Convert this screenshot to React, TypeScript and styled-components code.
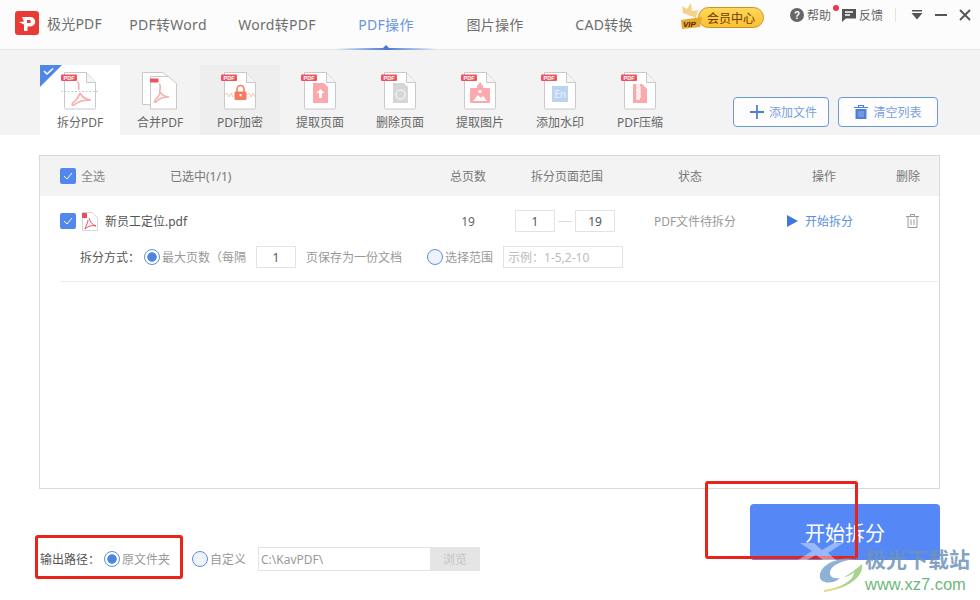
import React from "react";
import styled, { createGlobalStyle } from "styled-components";

const Global = createGlobalStyle`
  html, body { margin: 0; padding: 0; background: #fff; }
  body { font-family: "Noto Sans", "Noto Sans CJK SC", sans-serif; color: #666; }
  * { box-sizing: border-box; }
`;

const Page = styled.div`
  position: relative; width: 980px; height: 600px; overflow: hidden; background: #fff;
  display: flex; flex-direction: column;
`;
const Header = styled.header`
  height: 50px; flex: none; background: #fcfcfc; border-bottom: 1px solid #e2e4e8;
  display: flex; align-items: flex-start; padding-left: 15px;
`;
const Brand = styled.div`
  width: 98.5px; height: 49px; flex: none; display: flex; align-items: center; gap: 8px;
  font-size: 14px; color: #6e6e6e; padding-bottom: 4px; letter-spacing: .2px;
`;
const LogoMark = styled.svg`flex: none;`;
const Nav = styled.nav`display: flex; flex: none;`;
const NavItem = styled.div<{ $active?: boolean }>`
  position: relative; width: 109px; height: 49px; display: flex; align-items: center; justify-content: center;
  font-size: 14px; padding-bottom: 2px; white-space: nowrap; letter-spacing: .3px;
  color: ${(p) => (p.$active ? "#6b95dc" : "#6e6e6e")};
`;
const NavMark = styled.span`
  position: absolute; left: 4px; right: 4px; bottom: -1px; height: 2px;
  background: linear-gradient(90deg, rgba(74,120,214,0), #4a78d6 50%, rgba(74,120,214,0));
  &::after {
    content: ""; position: absolute; left: 50%; top: -3px; margin-left: -3px;
    border: 3px solid transparent; border-top: 0; border-bottom: 3px solid #4a78d6;
  }
`;
const HeaderRight = styled.div`
  margin-left: 21.5px; height: 29px; flex: none; display: flex; align-items: center; font-size: 12px; color: #666; white-space: nowrap;
`;
const Vip = styled.div`display: flex; align-items: center; position: relative; width: 84px; height: 26px; margin-top: 4px; flex: none;`;
const VipPill = styled.span`
  position: absolute; left: 18px; right: 0; top: 3.5px; height: 21px; border-radius: 11px;
  background: linear-gradient(#ffd75a, #fcc034); border: 1px solid #c89422; color: #6b3b00; font-size: 12px;
  display: flex; align-items: center; justify-content: flex-end; padding-right: 8px;
`;
const VipIcon = styled.svg`position: absolute; left: 0; top: -3px; z-index: 1;`;
const Tool = styled.div`display: flex; align-items: center; gap: 3px; position: relative; flex: none;`;
const HelpGroup = styled.div`display: flex; align-items: center; gap: 11px; margin-left: 26px; flex: none;`;
const Dot = styled.span`
  position: absolute; right: -8px; top: -1px; width: 6px; height: 6px; border-radius: 50%; background: #f0344a;
`;
const VDivider = styled.span`width: 1px; height: 14px; background: #e3e3e3; margin: 0 15px 0 12px; flex: none;`;
const WinButtons = styled.div`display: flex; align-items: center; gap: 12px; flex: none;`;

const Toolbar = styled.div`
  height: 85px; flex: none; background: #f3f3f3; padding: 15px 42px 0 40px; display: flex; align-items: flex-start;
`;
const ToolItem = styled.div<{ $state?: "selected" | "hover" }>`
  position: relative; width: 80px; height: 70px; flex: none; padding-top: 6px;
  display: flex; flex-direction: column; align-items: center;
  font-size: 12px; color: #666; white-space: nowrap;
  background: ${(p) => (p.$state === "selected" ? "#fff" : p.$state === "hover" ? "#eeeeee" : "transparent")};
`;
const ToolLabel = styled.span`margin-top: 3px; line-height: 18px;`;
const Corner = styled.svg`position: absolute; left: 0; top: 0;`;
const ToolActions = styled.div`margin-left: auto; margin-top: 32px; display: flex; gap: 9px;`;
const OutlineBtn = styled.button<{ $w: number; $pad: number }>`
  width: ${(p) => p.$w}px; height: 30px; background: #fdfdfd; border: 1px solid #6f97dc; border-radius: 4px;
  color: #7aa0de; font: inherit; font-size: 12px; display: flex; align-items: center; justify-content: center; gap: 5px;
  padding: 0 0 0 ${(p) => p.$pad}px;
`;

const Main = styled.main`padding: 20px 40px 0 39px; flex: none;`;
const Table = styled.section`height: 334px; border: 1px solid #d9d9d9; background: #fff;`;
const Columns = "370px 76px 122px 124px 144px 24px";
const TableHead = styled.div`
  height: 40px; background: #f3f3f3; padding-left: 20px; display: grid; grid-template-columns: ${Columns};
  align-items: center; font-size: 12px; color: #777;
`;
const Cell = styled.div`display: flex; justify-content: center; align-items: center; white-space: nowrap;`;
const LeftCell = styled.div`display: flex; align-items: center; white-space: nowrap;`;
const SelectedText = styled.span`margin-left: 65px;`;
const Check = styled.span`
  width: 16px; height: 16px; border-radius: 2px; background: #5288ee; display: flex; align-items: center; justify-content: center; flex: none;
`;
const CheckLabel = styled.span`margin-left: 5px; color: #888;`;
const RowMain = styled.div`
  height: 50px; padding-left: 20px; display: grid; grid-template-columns: ${Columns}; align-items: center; font-size: 12px; color: #666;
`;
const FileIcon = styled.svg`margin-left: 5px; flex: none;`;
const FileName = styled.span`margin-left: 6px; color: #555;`;
const RangeGroup = styled.div`display: flex; align-items: center; margin-left: -4px;`;
const RangeBox = styled.span`
  width: 40px; height: 22px; border: 1px solid #e3e3e3; display: flex; align-items: center; justify-content: center; color: #555; background: #fff;
`;
const Dash = styled.span`width: 14px; height: 1px; background: #ddd; margin: 0 3px;`;
const Muted = styled.span`color: #999; margin-left: 10px;`;
const StartLink = styled.span`display: flex; align-items: center; gap: 7px; color: #5b8fe0; margin-left: -8px;`;
const TrashIcon = styled.svg`margin-left: 8px; flex: none;`;
const RowOptions = styled.div`
  margin: -2px 1px 0 20px; padding: 0 0 11px 20px; height: 38px;
  border-bottom: 1px solid #ececec; display: flex; align-items: center; font-size: 12px; color: #999; white-space: nowrap;
`;
const OptionLabel = styled.span`color: #555; width: 64px; flex: none;`;
const Radio = styled.span<{ $on?: boolean }>`
  width: 16px; height: 16px; border-radius: 50%; flex: none; border: 1px solid #5f8fdc; margin-right: 2px;
  background: ${(p) => (p.$on ? "radial-gradient(circle, #4e84e4 0 4.4px, #fff 5px)" : "#eef3fb")};
`;
const NumBox = styled.span`
  width: 40px; height: 22px; margin: 0 10px; border: 1px solid #e3e3e3; display: flex; align-items: center; justify-content: center; color: #555;
`;
const SaveText = styled.span`width: 121px; flex: none;`;
const Example = styled.span`
  width: 120px; height: 22px; margin-left: 10px; border: 1px solid #e3e3e3; padding-left: 4px; color: #bbb; display: flex; align-items: center;
`;

const Footer = styled.footer`padding: 15px 40px 0 40px; display: flex; justify-content: space-between; align-items: flex-start;`;
const OutputRow = styled.div`margin-top: 43px; height: 24px; display: flex; align-items: center; font-size: 12px; color: #999; white-space: nowrap;`;
const OutputLabel = styled.span`color: #555; width: 64px; flex: none;`;
const OptionText = styled.span<{ $w: number }>`width: ${(p) => p.$w}px; flex: none;`;
const PathInput = styled.div`
  width: 172px; height: 24px; border: 1px solid #e3e3e3; border-right: 0; padding-left: 2px; display: flex; align-items: center; color: #999;
`;
const Browse = styled.span`
  width: 50px; height: 24px; background: #e5e5e5; color: #c4c4c4; display: flex; align-items: center; justify-content: center;
`;
const StartButton = styled.button`
  width: 190px; height: 56px; border: 0; border-radius: 4px; background: #5588f6; color: #fff; font: inherit; font-size: 20px; padding: 0;
`;
const RedBox = styled.div<{ $l: number; $t: number; $w: number; $h: number }>`
  position: absolute; left: ${(p) => p.$l}px; top: ${(p) => p.$t}px; width: ${(p) => p.$w}px; height: ${(p) => p.$h}px;
  border: 3px solid #e8231a; border-radius: 3px; pointer-events: none;
`;
const Watermark = styled.div`
  position: absolute; left: 790px; top: 540px; width: 190px; height: 56px; pointer-events: none;
`;
const WmArt = styled.svg`position: absolute; left: 0; top: 0;`;
const WmTitle = styled.span`
  position: absolute; left: 75px; top: 6px; font-size: 21px; line-height: 26px; font-weight: 700; color: #6f93ba; opacity: .85; white-space: nowrap;
`;
const WmUrl = styled.span`
  position: absolute; left: 75px; top: 34px; font-family: "Liberation Sans", sans-serif; font-size: 16.500px; line-height: 20px; color: #6db87a; white-space: nowrap;
`;

type Kind = "split" | "lock" | "up" | "del" | "image" | "water" | "zip";

const DocIcon = ({ kind }: { kind: Kind }) => (
  <svg width="40" height="40" viewBox="0 0 40 40">
    <path d="M4.5 1.500h22l9 10v25a1.500 1.500 0 0 1-1.500 1.500H6a1.500 1.500 0 0 1-1.500-1.500z" fill="#fff" stroke="#c9c9c9" />
    <path d="M26.500 1.500v10h9" fill="#f4f4f4" stroke="#c9c9c9" />
    <rect x="1" y="3.500" width="16" height="6.500" rx="1" fill="#f0535f" />
    <text x="9" y="9" fontSize="5.500" fontFamily="Liberation Sans" fontWeight="700" textAnchor="middle" fill="#fff">PDF</text>
    {kind === "split" && (
      <g fill="none" stroke="#f5b0b0" strokeWidth="1.700">
        <path d="M1 20.500h38" stroke="#b7d3d8" strokeDasharray="2 1.500" strokeWidth="1" />
        <path d="M17 11c3 0 1 6 2 8" />
        <path d="M20 22c2 4 6 7 11 7-6 0-13 1-17 5-2 1-3-1 0-3 2-2 5-5 6-9" />
      </g>
    )}
    {kind === "lock" && (
      <g>
        <path d="M5 24l2-2 2 4 2-4 2 4M27 24l2-2 2 4 2-4 2 4" fill="none" stroke="#f6c4ae" />
        <path d="M17 21v-3a3.500 3.500 0 0 1 7 0v3" fill="none" stroke="#f9785f" strokeWidth="1.500" />
        <rect x="14.500" y="20.500" width="12" height="8.500" rx="1.200" fill="#f9785f" />
        <rect x="19.500" y="23" width="2" height="2.500" fill="#fff" />
      </g>
    )}
    {kind === "up" && (
      <g>
        <path d="M13 12h11l4 4v16H13z" fill="#fba9ad" />
        <path d="M20.500 18l4 4h-2.500v5h-3v-5h-2.500z" fill="#fff" />
      </g>
    )}
    {kind === "del" && (
      <g>
        <path d="M13 12h11l4 4v16H13z" fill="#d6d6d6" />
        <circle cx="20.500" cy="23.500" r="4.500" fill="none" stroke="#eee" strokeWidth="1.600" />
      </g>
    )}
    {kind === "image" && (
      <g>
        <rect x="10" y="17" width="20" height="15" rx="1" fill="#fba9ad" />
        <path d="M20 11l3 4v3h-6v-3z" fill="#fba9ad" />
        <path d="M13 30l5-6 3 3 2-2 4 5z" fill="#fff" />
        <circle cx="20" cy="20.500" r="1.600" fill="#fff" />
      </g>
    )}
    {kind === "water" && (
      <g>
        <rect x="12" y="15" width="16" height="16" fill="#bcd4f2" />
        <text x="20" y="27" fontSize="10" fontFamily="Noto Sans" textAnchor="middle" fill="#eaf2fc">En</text>
      </g>
    )}
    {kind === "zip" && (
      <g>
        <path d="M13 13h9l5 5v14H13z" fill="#fba9ad" />
        <path d="M20 14h-3v2h3v2h-3v2h3v2h-3v2h3v2h-3v2h3" fill="none" stroke="#fff" strokeWidth="1.300" />
      </g>
    )}
  </svg>
);

const MergeIcon = () => (
  <svg width="40" height="40" viewBox="0 0 40 40">
    <path d="M2.500 1.500h20l7 5v27h-27z" fill="#fff" stroke="#c9c9c9" />
    <path d="M10.500 5.500h18l8 7v25.500h-26z" fill="#fff" stroke="#c9c9c9" />
    <rect x="10" y="7.500" width="8.500" height="4" fill="#f0535f" />
    <g fill="none" stroke="#f5b0b0" strokeWidth="1.600">
      <path d="M19 13c3 1 0 6 1 8 2 3 5 5 9 5-5 0-10 1-13 5-2 1-2-1 0-3 2-2 4-5 4-7" />
    </g>
  </svg>
);

const SmallCheck = () => (
  <svg width="10" height="8" viewBox="0 0 10 8"><path d="M1 4l3 3 5-6" fill="none" stroke="#fff" strokeWidth="1" /></svg>
);

const tools: { label: string; kind?: Kind; state?: "selected" | "hover" }[] = [
  { label: "拆分PDF", kind: "split", state: "selected" },
  { label: "合并PDF" },
  { label: "PDF加密", kind: "lock", state: "hover" },
  { label: "提取页面", kind: "up" },
  { label: "删除页面", kind: "del" },
  { label: "提取图片", kind: "image" },
  { label: "添加水印", kind: "water" },
  { label: "PDF压缩", kind: "zip" },
];

export default function App() {
  return (
    <Page>
      <Global />
      <Header>
        <Brand>
          <LogoMark width="24" height="24" viewBox="0 0 24 24">
            <rect width="24" height="24" rx="3" fill="#ea3a36" />
            <path d="M7 6h8.500a4.700 4.700 0 0 1 0 9.500H12.500V20H9v-6.500L4 11l5-.5z" fill="#fff" />
            <rect x="12" y="9" width="3.600" height="3" fill="#ea3a36" />
          </LogoMark>
          极光PDF
        </Brand>
        <Nav>
          <NavItem>PDF转Word</NavItem>
          <NavItem>Word转PDF</NavItem>
          <NavItem $active>PDF操作<NavMark /></NavItem>
          <NavItem>图片操作</NavItem>
          <NavItem>CAD转换</NavItem>
        </Nav>
        <HeaderRight>
          <Vip>
            <VipPill>会员中心</VipPill>
            <VipIcon width="24" height="28" viewBox="0 0 24 28">
              <path d="M3 12L2 5l5 3 4-6 1 8 6-1-2 8z" fill="#f3d389" />
              <path d="M1 19l21-3-2 10-18 2z" fill="#e7a92e" />
              <text x="3" y="26" fontSize="8" fontWeight="700" fontStyle="italic" fontFamily="Liberation Sans" fill="#4e2c00">VIP</text>
            </VipIcon>
          </Vip>
          <HelpGroup>
            <Tool>
              <svg width="14" height="14" viewBox="0 0 14 14">
                <circle cx="7" cy="7" r="7" fill="#666" />
                <text x="7" y="10.500" fontSize="10" fontWeight="700" fontFamily="Liberation Sans" textAnchor="middle" fill="#fff">?</text>
              </svg>
              帮助
              <Dot />
            </Tool>
            <Tool>
              <svg width="14" height="14" viewBox="0 0 14 14">
                <path d="M0 1h14v9.500H4L0 14z" fill="#555" />
                <path d="M3 4h8M3 7h5" stroke="#fff" strokeWidth="1.400" />
              </svg>
              反馈
            </Tool>
          </HelpGroup>
          <VDivider />
          <WinButtons>
            <svg width="12" height="10" viewBox="0 0 12 10">
              <path d="M1 0h10v1.500H1z" fill="#555" /><path d="M0.500 3h11L6 9.500z" fill="#555" />
            </svg>
            <svg width="12" height="10" viewBox="0 0 12 10"><path d="M0 4h12v2H0z" fill="#555" /></svg>
            <svg width="12" height="12" viewBox="0 0 12 12">
              <path d="M1 1l10 10M11 1L1 11" stroke="#555" strokeWidth="1.900" />
            </svg>
          </WinButtons>
        </HeaderRight>
      </Header>

      <Toolbar>
        {tools.map((t) => (
          <ToolItem key={t.label} $state={t.state}>
            {t.state === "selected" && (
              <Corner width="22" height="22" viewBox="0 0 22 22">
                <path d="M0 0h22L0 22z" fill="#4f86e8" />
                <path d="M4 6l3 3 6-5.500" fill="none" stroke="#fff" strokeWidth="1.600" />
              </Corner>
            )}
            {t.kind ? <DocIcon kind={t.kind} /> : <MergeIcon />}
            <ToolLabel>{t.label}</ToolLabel>
          </ToolItem>
        ))}
        <ToolActions>
          <OutlineBtn $w={96} $pad={5}>
            <svg width="14" height="14" viewBox="0 0 14 14"><path d="M7 0v14M0 7h14" stroke="#4f80d8" strokeWidth="1.800" /></svg>
            添加文件
          </OutlineBtn>
          <OutlineBtn $w={100} $pad={0}>
            <svg width="14" height="14" viewBox="0 0 14 14">
              <path d="M0 2.500h14M4.500 2V.500h5V2" fill="none" stroke="#4f80d8" strokeWidth="1.200" />
              <path d="M1.500 4h11v10h-11z" fill="#4f80d8" />
              <path d="M5 6v6M7 6v6M9 6v6" stroke="#a7c1ee" strokeWidth=".8" />
            </svg>
            清空列表
          </OutlineBtn>
        </ToolActions>
      </Toolbar>

      <Main>
        <Table>
          <TableHead>
            <LeftCell>
              <Check><SmallCheck /></Check>
              <CheckLabel>全选</CheckLabel>
              <SelectedText>已选中(1/1)</SelectedText>
            </LeftCell>
            <Cell>总页数</Cell>
            <Cell>拆分页面范围</Cell>
            <Cell>状态</Cell>
            <Cell>操作</Cell>
            <Cell>删除</Cell>
          </TableHead>
          <RowMain>
            <LeftCell>
              <Check><SmallCheck /></Check>
              <FileIcon width="18" height="19" viewBox="0 0 18 19">
                <path d="M1.500.500h10l5 5v13h-15z" fill="#fff" stroke="#d8d8d8" />
                <rect x="1" y="1" width="5" height="5" fill="#e4515a" />
                <path d="M8 6c1 3 3 7 7 8-4-1-8 0-11 3 1-3 3-7 3-9" fill="none" stroke="#e4515a" strokeWidth="1" />
              </FileIcon>
              <FileName>新员工定位.pdf</FileName>
            </LeftCell>
            <Cell>19</Cell>
            <Cell>
              <RangeGroup>
                <RangeBox>1</RangeBox>
                <Dash />
                <RangeBox>19</RangeBox>
              </RangeGroup>
            </Cell>
            <Cell><Muted>PDF文件待拆分</Muted></Cell>
            <Cell>
              <StartLink>
                <svg width="11" height="12" viewBox="0 0 11 12"><path d="M0 0l11 6-11 6z" fill="#3f78de" /></svg>
                开始拆分
              </StartLink>
            </Cell>
            <Cell>
              <TrashIcon width="13" height="14" viewBox="0 0 13 14" fill="none" stroke="#999" strokeWidth="1">
                <path d="M0 2.500h13M4.500 2V.500h4V2M2 3v10.500h9V3M5 5.500v5.500M8 5.500v5.500" />
              </TrashIcon>
            </Cell>
          </RowMain>
          <RowOptions>
            <OptionLabel>拆分方式：</OptionLabel>
            <Radio $on />
            最大页数（每隔
            <NumBox>1</NumBox>
            <SaveText>页保存为一份文档</SaveText>
            <Radio />
            选择范围
            <Example>示例：1-5,2-10</Example>
          </RowOptions>
        </Table>
      </Main>

      <Footer>
        <OutputRow>
          <OutputLabel>输出路径：</OutputLabel>
          <Radio $on />
          <OptionText $w={70}>原文件夹</OptionText>
          <Radio />
          <OptionText $w={48}>自定义</OptionText>
          <PathInput>C:\KavPDF\</PathInput>
          <Browse>浏览</Browse>
        </OutputRow>
        <StartButton>开始拆分</StartButton>
      </Footer>

      <RedBox $l={35} $t={535} $w={148} $h={44} />
      <RedBox $l={705} $t={481} $w={153} $h={78} />

      <Watermark>
        <WmArt width="190" height="56" viewBox="0 0 190 56">
          <path d="M10 3h14l8 7 12-7h9L38 13l8 7H33l-7-5-9 5H8l14-9z" fill="#fff" opacity=".4" />
          <g opacity=".85">
            <path d="M30 38C28 26 46 16 66 19 54 20 40 25 40 33c0 5 6 6 10 5-6 6-18 6-20 0z" fill="#7ba4d0" />
            <path d="M72 24c2 12-12 22-28 26 10-6 20-10 20-18-2 2-6 5-10 5 6-3 12-8 18-13z" fill="#9ccb7c" />
            <path d="M34 50c7-1 14-3 20-6-4 4-11 7-20 8z" fill="#e0d76a" />
          </g>
        </WmArt>
        <WmTitle>极光下载站</WmTitle>
        <WmUrl>www.xz7.com</WmUrl>
      </Watermark>
    </Page>
  );
}
